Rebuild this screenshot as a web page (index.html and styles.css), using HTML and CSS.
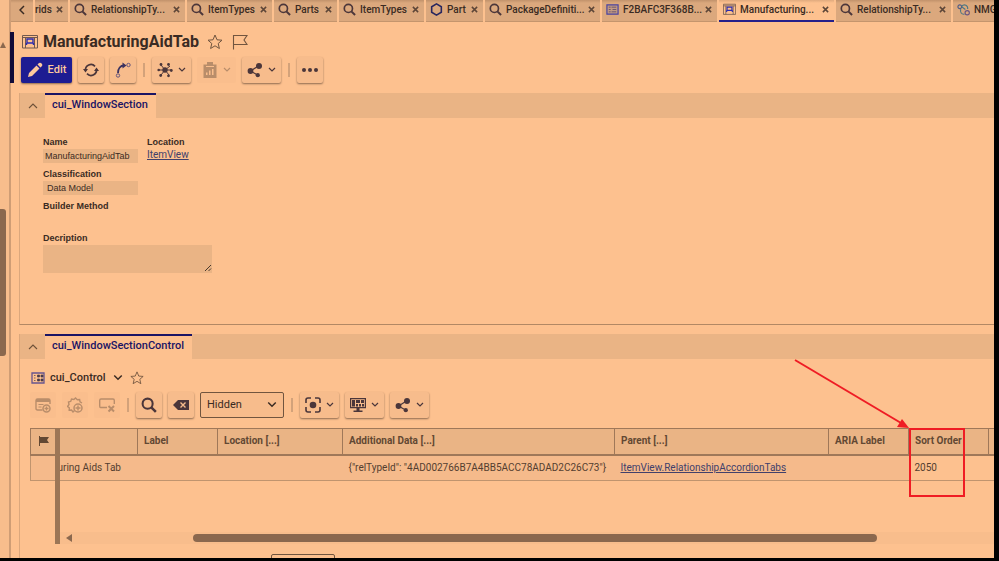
FILE: index.html
```html
<!DOCTYPE html>
<html lang="en">
<head>
<meta charset="utf-8">
<meta name="viewport" content="width=device-width, initial-scale=1">
<title>ManufacturingAidTab</title>
<link rel="stylesheet" href="styles.css">
</head>
<body>
<svg class="defs" aria-hidden="true">
  <symbol id="search" viewBox="0 0 14 14"><circle cx="5.8" cy="5.8" r="4.4" fill="none" stroke="currentColor" stroke-width="1.8"/><path d="M9 9l4 4" stroke="currentColor" stroke-width="2.2"/></symbol>
  <symbol id="close" viewBox="0 0 8 8"><path d="M1 1l6 6M7 1l-6 6" stroke="currentColor" stroke-width="1.7"/></symbol>
  <symbol id="down" viewBox="0 0 8 6"><path d="M1 1l3 3 3-3" fill="none" stroke="currentColor" stroke-width="1.2"/></symbol>
  <symbol id="up" viewBox="0 0 10 6"><path d="M1 5l4-4 4 4" fill="none" stroke="currentColor" stroke-width="1.1"/></symbol>
  <symbol id="star" viewBox="0 0 16 16"><path d="M8 1l2 4.800 5 .4-3.800 3.300 1.200 5L8 11.800l-4.400 2.700 1.200-5L1 6.200l5-.4z" fill="none" stroke="currentColor"/></symbol>
  <symbol id="window" viewBox="0 0 16 14"><path d="M.5.500h15v12.500H.5zM.5 2.500h15M3.500 2.500v10.500M12.500 2.500v10.500" fill="none" stroke="#71594f"/><path d="M5 4h6v4H5zM4.500 8v2M11.500 8v2" fill="none" stroke="#2b2bb0" stroke-width="1.400"/></symbol>
  <symbol id="share" viewBox="0 0 16 16"><path d="M3.500 9l8-5M3.500 9l7 4" stroke="currentColor" stroke-width="1.200"/><circle cx="3.500" cy="9" r="2.900" fill="currentColor"/><circle cx="12" cy="4" r="3" fill="currentColor"/><circle cx="10.800" cy="13.200" r="2.100" fill="currentColor"/></symbol>
</svg>
<div class="shell">
  <aside class="gutter"><span class="gutter-arrow"></span><span class="gutter-thumb"></span></aside>
  <div class="main">
    <nav class="tabs" aria-label="Open items">
      <button class="tab back" aria-label="Scroll tabs left"><svg width="6" height="10" viewBox="0 0 6 10"><path d="M5 1L1 5l4 4" fill="none" stroke="currentColor" stroke-width="1.500"/></svg></button>
      <button class="tab cut"><span class="name">rids</span><svg class="x"><use href="#close"/></svg></button>
      <button class="tab wide"><svg class="ti"><use href="#search"/></svg><span class="name">RelationshipTy...</span><svg class="x"><use href="#close"/></svg></button>
      <button class="tab mid"><svg class="ti"><use href="#search"/></svg><span class="name">ItemTypes</span><svg class="x"><use href="#close"/></svg></button>
      <button class="tab small"><svg class="ti"><use href="#search"/></svg><span class="name">Parts</span><svg class="x"><use href="#close"/></svg></button>
      <button class="tab mid"><svg class="ti"><use href="#search"/></svg><span class="name">ItemTypes</span><svg class="x"><use href="#close"/></svg></button>
      <button class="tab tiny"><svg class="ti" viewBox="0 0 14 14"><path d="M7 1l5.200 3v6L7 13 1.800 10V4z" fill="none" stroke="#29275f" stroke-width="1.700"/></svg><span class="name">Part</span><svg class="x"><use href="#close"/></svg></button>
      <button class="tab wide"><svg class="ti"><use href="#search"/></svg><span class="name">PackageDefiniti...</span><svg class="x"><use href="#close"/></svg></button>
      <button class="tab wide"><svg class="ti" viewBox="0 0 14 14"><path d="M1 2h12v10H1z" fill="#c39a83" stroke="#4943a0" stroke-width="1.300"/><path d="M3 4.500h2M6 4.500h5M3 7h2M7 7h4M3 9.500h2M6 9.500h5" stroke="#67536f"/></svg><span class="name">F2BAFC3F368B...</span><svg class="x"><use href="#close"/></svg></button>
      <button class="tab wide active" aria-current="page"><svg class="ti"><use href="#window"/></svg><span class="name">Manufacturing...</span><svg class="x"><use href="#close"/></svg></button>
      <button class="tab wide"><svg class="ti"><use href="#search"/></svg><span class="name">RelationshipTy...</span><svg class="x"><use href="#close"/></svg></button>
      <button class="tab last"><svg class="ti" viewBox="0 0 14 14"><circle cx="3" cy="4" r="2" fill="none" stroke="#4f5b86" stroke-width="1.200"/><circle cx="11" cy="10.500" r="2.300" fill="none" stroke="#6a5580" stroke-width="1.200"/><path d="M5 3.500c3-3 7-1 6.500 3M4 6.500C3 10 5 12.500 8 12M5 4l4 3" fill="none" stroke="#4c7883" stroke-width="1.200"/></svg><span class="name">NMG</span></button>
    </nav>

    <header class="head">
      <div class="title-row">
        <svg class="title-icon"><use href="#window"/></svg>
        <h1>ManufacturingAidTab</h1>
        <svg class="title-star"><use href="#star"/></svg>
        <svg class="title-flag" viewBox="0 0 16 16"><path d="M1.500 15.500V1.500h13.500l-3 4.500 3 4.500H1.500" fill="none" stroke="currentColor" stroke-width="1.100"/></svg>
      </div>
      <div class="toolbar">
        <button class="btn edit"><svg width="16" height="16" viewBox="0 0 16 16"><path d="M1 15l1-4 7.500-7.500 3 3L5 14zM10.500 2.500L12 1q1-.7 2 0l1 1q.7 1 0 2l-1.500 1.500z" fill="currentColor"/></svg>Edit</button>
        <button class="btn" aria-label="Refresh"><svg width="16" height="16" viewBox="0 0 16 16"><path d="M2.500 8.500a5.500 5.500 0 0 1 9.500-4.200M13.500 7.500A5.500 5.500 0 0 1 4 11.700" fill="none" stroke="currentColor" stroke-width="1.700"/><path d="M0 7h5l-2.500 3.500zM11 9h5l-2.500-3.500z" fill="currentColor"/></svg></button>
        <button class="btn" aria-label="Promote"><svg width="16" height="16" viewBox="0 0 16 16"><path d="M3 11C3 6.500 5.500 3.500 9 3.500" fill="none" stroke="#3b3260" stroke-width="1.800"/><path d="M7.500.5l4 3-4 3z" fill="#3b3260"/><circle cx="13.500" cy="3" r="1.700" fill="none" stroke="#66557b"/><circle cx="3" cy="13.500" r="1.700" fill="none" stroke="#66557b"/></svg></button>
        <span class="sep"></span>
        <button class="btn menu" aria-label="Navigate"><svg width="16" height="16" viewBox="0 0 16 16"><path d="M8 8L4 3M8 8l5-4M8 8H2M8 8h6M8 8l-4 5M8 8l4 5" stroke="currentColor"/><circle cx="8" cy="8" r="2.700" fill="currentColor"/><g fill="currentColor"><circle cx="4" cy="2.500" r="1.400"/><circle cx="11.500" cy="2.500" r="1.400"/><circle cx="1.700" cy="8" r="1.300"/><circle cx="14.300" cy="8.500" r="1.400"/><circle cx="3.700" cy="13.500" r="1.400"/><circle cx="11.500" cy="13.800" r="1.400"/></g></svg><svg class="caret"><use href="#down"/></svg></button>
        <button class="btn menu off" disabled aria-label="Reports"><svg width="16" height="16" viewBox="0 0 16 16"><path fill-rule="evenodd" d="M1.500 2.500H5V0h6v2.500h3.500V16h-13zM4 10.500V13h1.500v-2.500zm3-2V13h1.500V8.500zM10 7v6h1.500V7zM4 4v1h8V4z" fill="currentColor"/></svg><svg class="caret"><use href="#down"/></svg></button>
        <button class="btn menu" aria-label="Share"><svg width="16" height="16"><use href="#share"/></svg><svg class="caret"><use href="#down"/></svg></button>
        <span class="sep"></span>
        <button class="btn" aria-label="More"><svg width="16" height="16" viewBox="0 0 16 16"><g fill="currentColor"><circle cx="2" cy="8" r="2"/><circle cx="8" cy="8" r="2"/><circle cx="14" cy="8" r="2"/></g></svg></button>
      </div>
    </header>

    <section class="panel form-panel">
      <div class="band"><button class="fold" aria-label="Collapse"><svg width="10" height="6"><use href="#up"/></svg></button><h2>cui_WindowSection</h2></div>
      <form class="form">
        <div class="field"><label for="name">Name</label><input id="name" type="text" value="ManufacturingAidTab"></div>
        <div class="field"><span class="label">Location</span><a href="#">ItemView</a></div>
        <div class="field row"><label for="class">Classification</label><input id="class" class="inset" type="text" value="Data Model"></div>
        <div class="field row"><label for="method">Builder Method</label><input id="method" class="blank" type="text"></div>
        <div class="field row"><label for="desc">Decription</label><span class="area"><textarea id="desc"></textarea><svg width="8" height="8" viewBox="0 0 8 8"><path d="M1 7l6-6M4.500 7L7 4.500" stroke="#4b3a2d"/></svg></span></div>
      </form>
    </section>

    <section class="panel grid-panel">
      <div class="band"><button class="fold" aria-label="Collapse"><svg width="10" height="6"><use href="#up"/></svg></button><h2>cui_WindowSectionControl</h2></div>
      <div class="sub-title">
        <svg width="14" height="12" viewBox="0 0 14 12"><path d="M1 1h12v10H1z" fill="none" stroke="#68558e" stroke-width="1.300"/><path d="M3 3.500h1.500M3 6h1.500M3 8.500h1.500M6.500 3h2v2h-2zM10 3h2v2h-2zM6.500 7h2v2h-2zM10 7h2v2h-2z" fill="#4b3c4b" stroke="#4b3c4b" stroke-width=".7"/></svg>
        <h3>cui_Control</h3>
        <svg class="big-caret"><use href="#down"/></svg>
        <svg class="sub-star"><use href="#star"/></svg>
      </div>
      <div class="toolbar grid-tools">
        <button class="btn off" disabled aria-label="New row"><svg width="16" height="16" viewBox="0 0 16 16"><path d="M7.500 13H2.500Q1 13 1 11.500v-8Q1 2 2.500 2h11Q15 2 15 3.500V7" fill="none" stroke="currentColor" stroke-width="1.400"/><path d="M1 2h14v3H1z" fill="currentColor"/><path d="M3.500 7.500h5M3.500 10h3" stroke="currentColor"/><circle cx="11.500" cy="11.500" r="3.500" fill="none" stroke="currentColor" stroke-width="1.500"/><path d="M9.500 11.500h4M11.500 9.500v4" stroke="currentColor" stroke-width="1.300"/></svg></button>
        <button class="btn off" disabled aria-label="Add related"><svg width="16" height="16" viewBox="0 0 16 16"><path d="M7.500 13.500L6 15l-1.500-2-2.300.2.1-2.400L.5 9.500l1.500-2L1.500 5l2.300-.7.7-2.300 2.400.5L8.500 1l1.800 1.700 2.300-.2.4 2.400L15 6" fill="none" stroke="currentColor" stroke-width="1.400"/><circle cx="11" cy="11" r="4" fill="none" stroke="currentColor" stroke-width="1.500"/><path d="M8.500 11h5M11 8.500v5" stroke="currentColor" stroke-width="1.400"/></svg></button>
        <button class="btn off" disabled aria-label="Delete row"><svg width="16" height="16" viewBox="0 0 16 16"><path d="M8 10.500H1.500Q.7 10.500.7 9V3.500Q.7 2 2 2h12q1.300 0 1.300 1.500V7" fill="none" stroke="currentColor" stroke-width="1.400"/><path d="M9.500 9l5.500 5.500M15 9l-5.500 5.500" stroke="currentColor" stroke-width="2"/></svg></button>
        <span class="sep"></span>
        <button class="btn" aria-label="Search"><svg width="16" height="16"><use href="#search"/></svg></button>
        <button class="btn" aria-label="Clear"><svg width="16" height="12" viewBox="0 0 16 12"><path d="M0 6l5-5h11v10H5z" fill="currentColor"/><path d="M7.500 3.500l5 5M12.500 3.500l-5 5" stroke="#f7bc8c" stroke-width="1.400"/></svg></button>
        <span class="pick"><select aria-label="Search mode"><option>Hidden</option></select><svg class="big-caret"><use href="#down"/></svg></span>
        <span class="sep"></span>
        <button class="btn menu" aria-label="Focus"><svg width="16" height="16" viewBox="0 0 16 16"><path d="M1 6V3q0-2 2-2h3M10 1h3q2 0 2 2v3M15 10v3q0 2-2 2h-3M6 15H3q-2 0-2-2v-3" fill="none" stroke="currentColor" stroke-width="1.600"/><circle cx="8" cy="8" r="3.300" fill="currentColor"/></svg><svg class="caret"><use href="#down"/></svg></button>
        <button class="btn menu" aria-label="Layout"><svg width="16" height="16" viewBox="0 0 16 16"><path d="M.6 1.600h14.800v9H.6z" fill="none" stroke="currentColor" stroke-width="1.200"/><path d="M2 3h3v6.500H2zM6 3h4v3H6zM11 3h3v3h-3zM6 7h2v2.500H6zM9 7h2v2.500H9zM12 7h2v2.500h-2zM6.500 11h3v2.500h3V15h-9v-1.500h3z" fill="currentColor"/></svg><svg class="caret"><use href="#down"/></svg></button>
        <button class="btn menu" aria-label="Share"><svg width="16" height="16"><use href="#share"/></svg><svg class="caret"><use href="#down"/></svg></button>
      </div>
      <div class="sheet">
        <table>
          <colgroup><col class="c-flag"><col class="c-text"><col class="c-label"><col class="c-loc"><col class="c-data"><col class="c-parent"><col class="c-label"><col class="c-label"><col></colgroup>
          <thead><tr>
            <th class="flag"><svg width="10" height="10" viewBox="0 0 10 10"><path d="M0 0h1v10H0zM1 1H10L8 4l2 3H1z" fill="currentColor"/></svg></th>
            <th></th><th>Label</th><th>Location [...]</th><th>Additional Data [...]</th><th>Parent [...]</th><th>ARIA Label</th>
            <th class="marked">Sort Order<span class="mark-box"></span><svg class="mark-arrow" viewBox="0 0 116 72"><path d="M1 2l106 63" stroke="#ef1c24" stroke-width="2"/><path d="M115 70l-12-1 5-8z" fill="#ef1c24"/></svg></th>
            <th></th>
          </tr></thead>
          <tbody><tr><td></td><td class="cut-text">uring Aids Tab</td><td></td><td></td><td>{"relTypeId": "4AD002766B7A4BB5ACC78ADAD2C26C73"}</td><td><a href="#">ItemView.RelationshipAccordionTabs</a></td><td></td><td class="focus">2050</td><td class="focus"></td></tr></tbody>
        </table>
        <div class="scroll"><span class="scroll-arrow"></span><span class="scroll-thumb"></span></div>
        <span class="divider"></span>
      </div>
      <div class="pager"><input class="page-size" type="text" aria-label="Page size"></div>
    </section>
  </div>
</div>
</body>
</html>
```

FILE: styles.css
```css
* { box-sizing: border-box; }

:root {
  --bg: #fdc18f;
  --band: #eab485;
  --raised: #f7bc8c;
  --line: #c0946e;
  --ink: #3a2b23;
  --icon: #4b363a;
  --soft: #6d5139;
  --navy: #1b1464;
}

body {
  margin: 0;
  background: #000;
  color: var(--ink);
  font: 10px/14px Roboto, "Liberation Sans", sans-serif;
}

h1, h2, h3 { margin: 0; font-weight: 500; }
button, input, select, textarea { margin: 0; padding: 0; border: 0; border-radius: 0; background: none; color: inherit; font: inherit; }
svg { display: block; flex: none; }
.defs { position: absolute; width: 0; height: 0; }

.shell {
  display: flex;
  height: 100vh;
  border: solid #000;
  border-width: 0 5px 3px 0;
  background: var(--bg);
  overflow: hidden;
}

.gutter {
  display: flex;
  flex: none;
  flex-direction: column;
  width: 11px;
  padding-top: 42px;
  border-right: 2px solid #cf9d75;
  background: #f8bd8c;
}
.gutter-arrow { border: 3px solid transparent; border-top: 0; border-bottom: 6px solid #8b684e; align-self: flex-start; }
.gutter-thumb { width: 6px; height: 147px; margin-top: 161px; border-radius: 0 3px 3px 0; background: #8b684e; }

.main { display: flex; flex: 1; flex-direction: column; min-width: 0; }

.tabs { display: flex; gap: 2px; height: 22px; }
.tab {
  display: flex;
  flex: none;
  align-items: center;
  gap: 4px;
  padding: 0 5px 2px 4px;
  border-bottom: 1px solid #c4956d;
  background: linear-gradient(#c1926b, #dba87d 3px);
  font-weight: 500;
  white-space: nowrap;
}
.tab .name { flex: 1; min-width: 0; text-align: left; }
.back { width: 22px; justify-content: center; }
.cut { width: 33px; padding-left: 0; }
.wide { width: 115px; }
.mid { width: 85px; }
.small { width: 63px; }
.tiny { width: 57px; }
.last { flex: 1; min-width: 0; padding-right: 0; }
.active { padding-bottom: 1px; border-bottom: 2px solid #25208a; background: linear-gradient(#e0aa7e, var(--bg) 3px); }
.ti { width: 13px; height: 13px; color: var(--icon); }
.x { width: 7px; height: 7px; color: #5d4638; }

.head { margin-top: 10px; padding-left: 7px; border-left: 4px solid #120c38; margin-left: -1px; }
.title-row { display: flex; align-items: center; gap: 5px; height: 20px; padding-left: 1px; margin-bottom: 5px; }
.title-icon { width: 16px; height: 14px; }
.title-row h1 { font-size: 16px; font-weight: 700; line-height: 20px; }
.title-star { width: 16px; height: 16px; margin: 0 4px 0 3px; color: #71553f; }
.title-flag { width: 16px; height: 16px; color: #71553f; }

.toolbar { display: flex; align-items: center; gap: 6px; height: 26px; }
.btn {
  display: flex;
  flex: none;
  align-items: center;
  justify-content: center;
  gap: 5px;
  width: 26px;
  height: 26px;
  border-radius: 2px;
  background: var(--raised);
  box-shadow: 0 1px 2px #8e6b50;
  color: var(--icon);
}
.menu { width: 39px; }
.caret { width: 8px; height: 6px; }
.off { background: #fabe8d; box-shadow: none; color: #b98d6a; }
.edit { width: 51px; background: #1d1c92; color: #fdc99d; font-size: 11px; font-weight: 500; }
.sep { width: 2px; height: 14px; margin: 0 1px; background: #d3a27a; }

.panel { display: flex; flex-direction: column; margin-left: 8px; border-left: 1px solid #dba77c; }
.form-panel { flex: 1; margin-top: 10px; border-bottom: 1px solid #b28864; }
.grid-panel { margin-top: 9px; }
.band { display: flex; height: 25px; background: var(--band); }
.fold { display: grid; place-items: center; width: 25px; color: var(--soft); }
.band h2 { padding: 3px 8px 0 7px; border-top: 2px solid var(--navy); background: var(--bg); color: var(--navy); font-size: 11px; font-weight: 500; line-height: 14px; }

.form {
  display: grid;
  grid-template-columns: 95px 1fr;
  gap: 5px 9px;
  padding: 18px 23px;
  font: 9px/13px "Liberation Sans", sans-serif;
}
.field { display: flex; flex-direction: column; align-items: flex-start; }
.row { grid-column: 1 / -1; }
.field label, .label { font-weight: bold; }
.field input { width: 95px; height: 14px; padding: 0 2px; background: var(--band); }
.field .inset { padding: 0 4px; }
.field .blank { background: none; }
.field a { font: 10px/12px Roboto, sans-serif; }
a { color: #41406b; }
.area { position: relative; }
textarea { display: block; width: 169px; height: 28px; background: var(--band); resize: none; }
.area svg { position: absolute; right: 0; bottom: 1px; }

.sub-title { display: flex; align-items: center; gap: 5px; padding: 10px 0 6px 11px; height: 33px; }
.sub-title h3 { font-size: 11px; }
.big-caret { width: 10px; height: 8px; }
.sub-title .big-caret { margin: 0 2px; }
.sub-star { width: 14px; height: 14px; color: #71553f; }
.grid-tools { padding-left: 10px; }
.pick { position: relative; width: 84px; height: 26px; }
.pick select { width: 100%; height: 100%; padding: 0 6px; appearance: none; border: 1px solid #71553f; border-radius: 2px; background: var(--raised); font-size: 11px; }
.pick svg { position: absolute; right: 7px; top: 9px; pointer-events: none; }

.sheet { position: relative; margin: 10px 0 0 10px; height: 116px; color: #543e30; }
table { width: 100%; table-layout: fixed; border-collapse: collapse; }
th, td { height: 26px; padding: 0 6px; text-align: left; white-space: nowrap; }
th { border: 1px solid #9f7859; border-bottom-width: 2px; background: var(--band); font-weight: 700; color: #624833; }
th:last-child { border-right: 0; padding: 0; }
tbody tr { border-left: 1px solid #c0946e; border-bottom: 1px solid #c0946e; background: #f5ba8b; }
.focus { background: var(--bg); }
.cut-text { padding: 0 2px; }
.flag { padding: 0 8px; }
.c-flag { width: 25px; }
.c-text { width: 82px; }
.c-label { width: 80px; }
.c-loc { width: 125px; }
.c-data { width: 272px; }
.c-parent { width: 214px; }
.marked { position: relative; }
.mark-box { position: absolute; left: 0; top: -1px; width: 56px; height: 69px; border: 2px solid #ef1c24; }
.mark-arrow { position: absolute; right: 78px; bottom: 24px; width: 116px; height: 72px; }
.divider { position: absolute; left: 25px; top: 0; width: 5px; height: 100%; background: #9c7656; }
.scroll { position: absolute; left: 30px; right: 0; bottom: 0; display: flex; align-items: center; height: 12px; padding-left: 6px; background: #f8bd8c; }
.scroll-arrow { border: 4px solid transparent; border-left: 0; border-right: 6px solid #8b684e; }
.scroll-thumb { width: 74%; height: 8px; margin: 0 117px 0 121px; border-radius: 4px; background: #8b684e; }

.pager { height: 14px; padding: 10px 0 0 251px; overflow: hidden; }
.page-size { display: block; width: 64px; height: 24px; border: 1px solid #71553f; border-radius: 2px; }
```
